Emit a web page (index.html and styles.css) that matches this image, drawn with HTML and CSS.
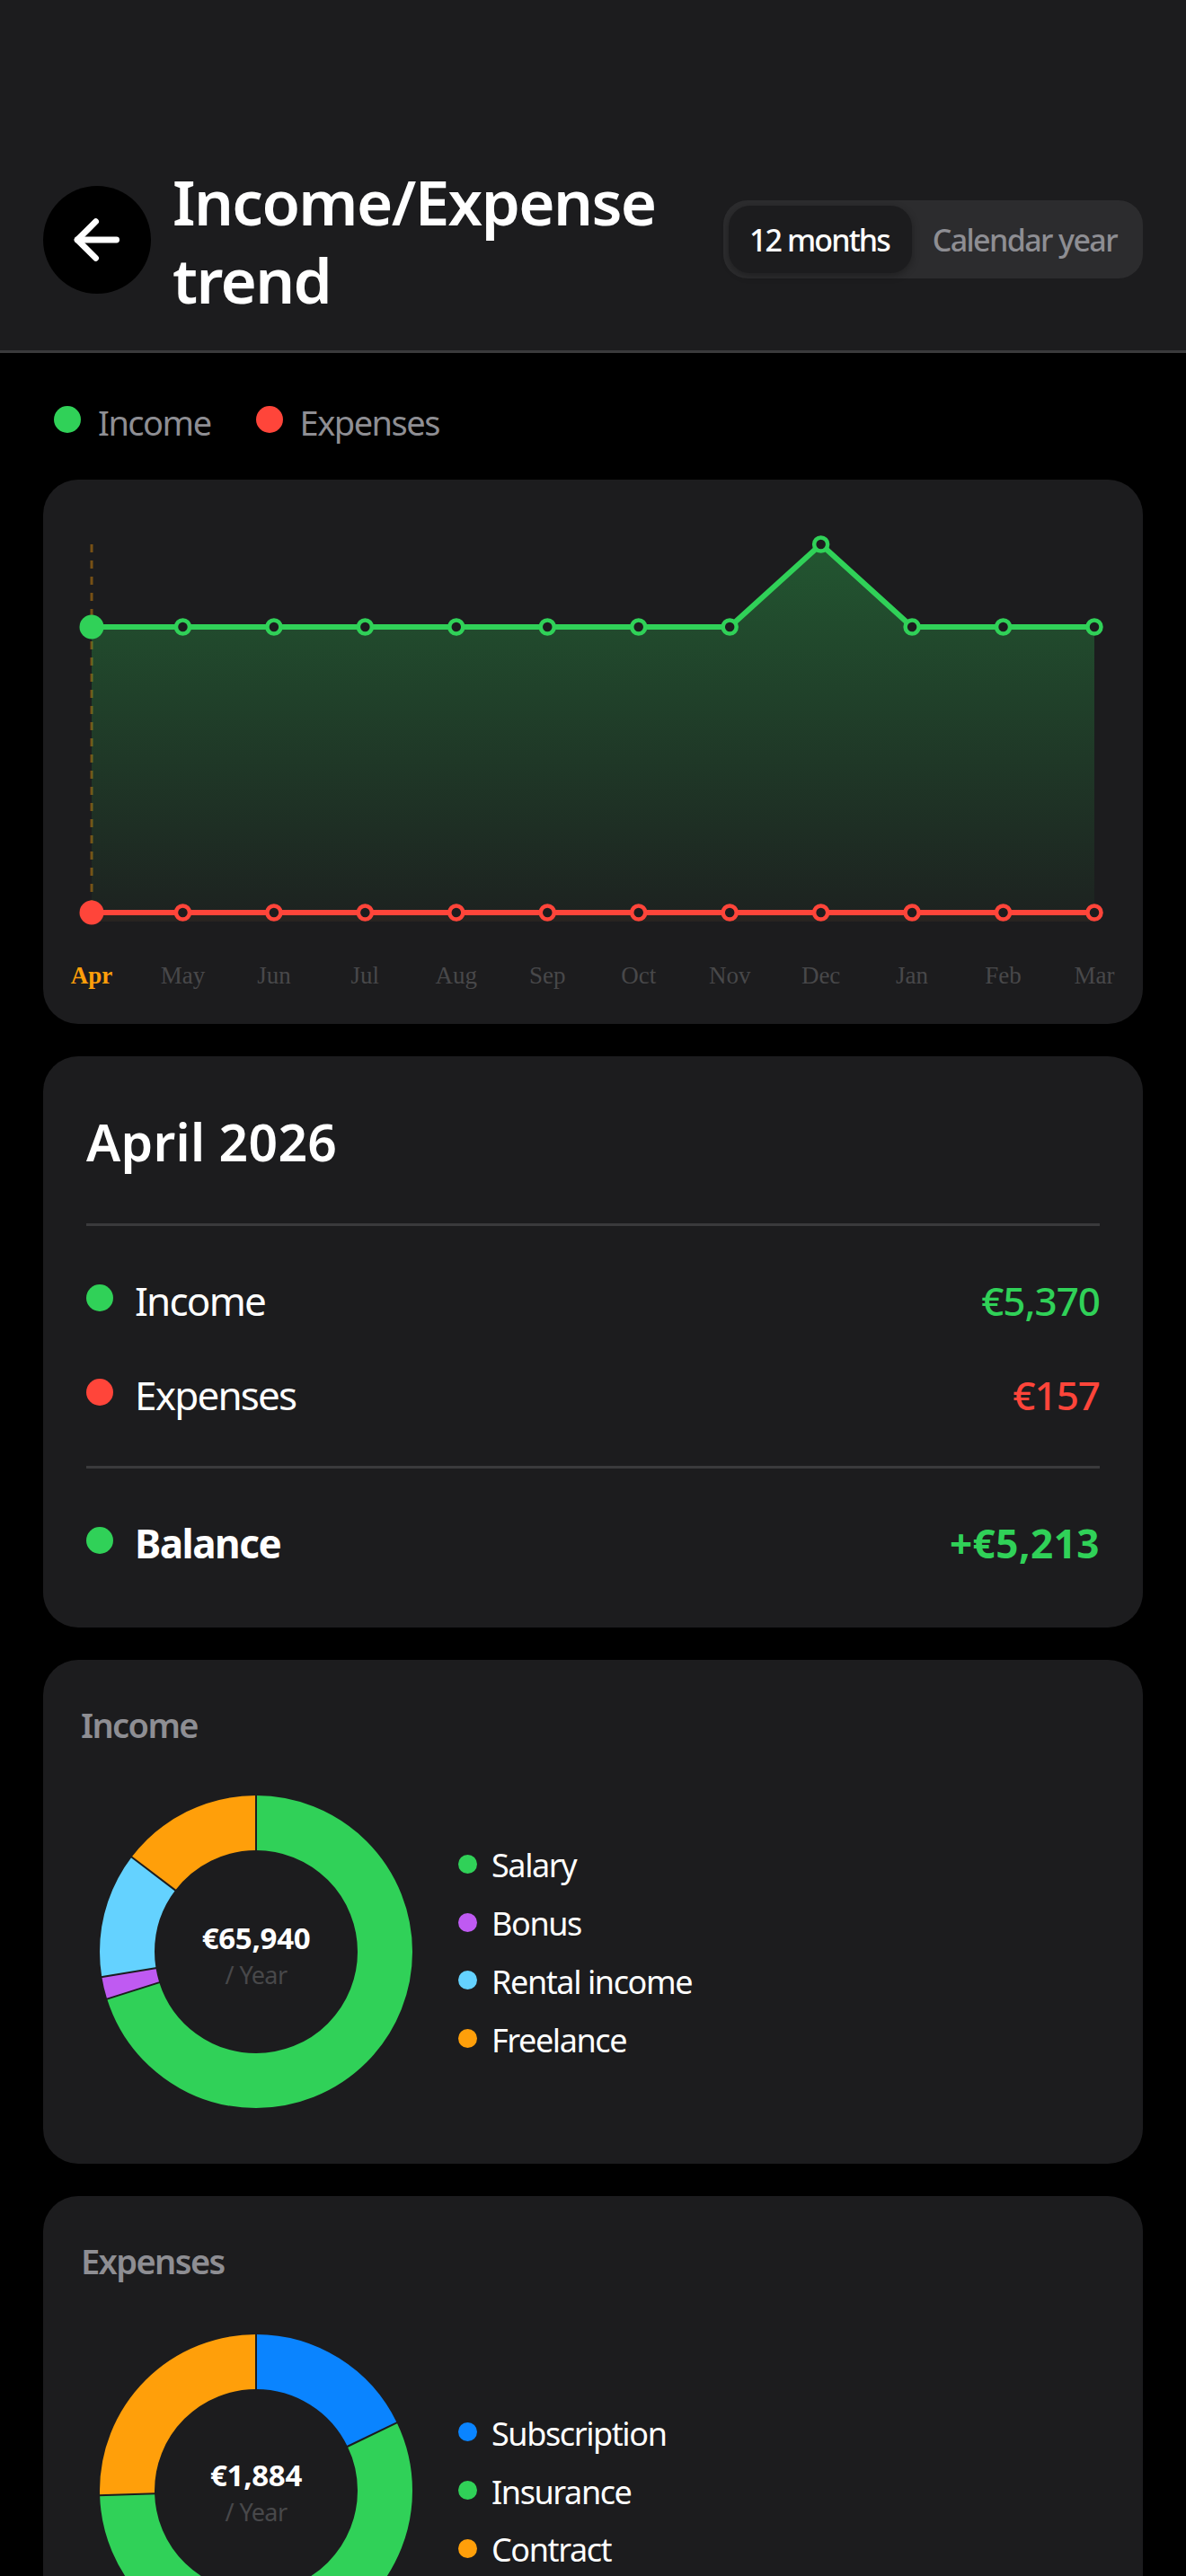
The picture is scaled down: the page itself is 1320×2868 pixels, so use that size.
FILE: index.html
```html
<!DOCTYPE html>
<html lang="en">
<head>
    <meta charset="UTF-8">
    <meta name="viewport" content="width=device-width, initial-scale=1.0">
    <title>Income/Expense trend</title>
    <link rel="stylesheet" href="styles.css">
</head>
<body>
    <div class="app">
        <header class="topbar">
            <button class="back-btn" aria-label="Back">
                <svg width="60" height="60" viewBox="0 0 60 60" fill="none" stroke="#fff" stroke-width="6.8" stroke-linecap="round" stroke-linejoin="round">
                    <path d="M51.6 30H8.1"/>
                    <path d="M28.6 9.7L8.1 30l20.5 20.3"/>
                </svg>
            </button>
            <h1 class="page-title">Income/Expense trend</h1>
            <div class="segmented">
                <span class="segment active">12 months</span>
                <span class="segment">Calendar year</span>
            </div>
        </header>

        <main class="content">
            <div class="chart-legend">
                <span class="legend-item"><i class="dot green"></i>Income</span>
                <span class="legend-item"><i class="dot red"></i>Expenses</span>
            </div>

            <section class="card chart-card">
                <svg class="trend" width="1224" height="606" viewBox="0 0 1224 606">
                    <defs>
                        <linearGradient id="incomeFill" x1="0" y1="0" x2="0" y2="1">
                            <stop offset="0" stop-color="#30d158" stop-opacity="0.32"/>
                            <stop offset="1" stop-color="#30d158" stop-opacity="0.03"/>
                        </linearGradient>
                    </defs>
                    <line class="cursor" x1="54" y1="72" x2="54" y2="482"/>
                    <polygon fill="url(#incomeFill)" points="54,164 764.18,164 865.64,72 967.09,164 1170,164 1170,492 54,492"/>
                    <rect x="54" y="482" width="1116" height="10" fill="#ff453a" opacity="0.05"/>
                    <polyline class="line income" points="54,164 764.18,164 865.64,72 967.09,164 1170,164"/>
                    <polyline class="line expense" points="54,482 1170,482"/>

                    <g class="pts income">
                        <circle cx="155.45" cy="164" r="7.5"/>
                        <circle cx="256.9" cy="164" r="7.5"/>
                        <circle cx="358.36" cy="164" r="7.5"/>
                        <circle cx="459.82" cy="164" r="7.5"/>
                        <circle cx="561.27" cy="164" r="7.5"/>
                        <circle cx="662.73" cy="164" r="7.5"/>
                        <circle cx="764.18" cy="164" r="7.5"/>
                        <circle cx="865.64" cy="72" r="7.5"/>
                        <circle cx="967.09" cy="164" r="7.5"/>
                        <circle cx="1068.55" cy="164" r="7.5"/>
                        <circle cx="1170" cy="164" r="7.5"/>
                    </g>
                    <g class="pts expense">
                        <circle cx="155.45" cy="482" r="7.5"/>
                        <circle cx="256.9" cy="482" r="7.5"/>
                        <circle cx="358.36" cy="482" r="7.5"/>
                        <circle cx="459.82" cy="482" r="7.5"/>
                        <circle cx="561.27" cy="482" r="7.5"/>
                        <circle cx="662.73" cy="482" r="7.5"/>
                        <circle cx="764.18" cy="482" r="7.5"/>
                        <circle cx="865.64" cy="482" r="7.5"/>
                        <circle cx="967.09" cy="482" r="7.5"/>
                        <circle cx="1068.55" cy="482" r="7.5"/>
                        <circle cx="1170" cy="482" r="7.5"/>
                    </g>
                    <circle cx="54" cy="164" r="13.5" fill="#30d158"/>
                    <circle cx="54" cy="482" r="13.5" fill="#ff453a"/>

                    <g class="months">
                        <text class="current" x="54" y="561">Apr</text>
                        <text x="155.45" y="561">May</text>
                        <text x="256.9" y="561">Jun</text>
                        <text x="358.36" y="561">Jul</text>
                        <text x="459.82" y="561">Aug</text>
                        <text x="561.27" y="561">Sep</text>
                        <text x="662.73" y="561">Oct</text>
                        <text x="764.18" y="561">Nov</text>
                        <text x="865.64" y="561">Dec</text>
                        <text x="967.09" y="561">Jan</text>
                        <text x="1068.55" y="561">Feb</text>
                        <text x="1170" y="561">Mar</text>
                    </g>
                </svg>
            </section>

            <section class="card month-card">
                <h2 class="month-title">April 2026</h2>
                <div class="month-rows">
                    <div class="month-row">
                        <span class="row-label"><i class="dot green"></i>Income</span>
                        <span class="row-value text-green">€5,370</span>
                    </div>
                    <div class="month-row">
                        <span class="row-label"><i class="dot red"></i>Expenses</span>
                        <span class="row-value text-red">€157</span>
                    </div>
                </div>
                <div class="month-row balance">
                    <span class="row-label"><i class="dot green"></i>Balance</span>
                    <span class="row-value text-green">+€5,213</span>
                </div>
            </section>

            <section class="card donut-card">
                <h3 class="donut-title">Income</h3>
                <div class="donut-row">
                    <div class="donut">
                        <svg width="350" height="350" viewBox="-175 -175 350 350">
                            <g class="ring" transform="rotate(-90)">
                                <circle stroke="#30d158" pathLength="360" stroke-dasharray="252.4 360"/>
                                <circle stroke="#bf5af2" pathLength="360" stroke-dasharray="8.3 360" stroke-dashoffset="-252.4"/>
                                <circle stroke="#64d2ff" pathLength="360" stroke-dasharray="46.6 360" stroke-dashoffset="-260.7"/>
                                <circle stroke="#ff9f0a" pathLength="360" stroke-dasharray="52.7 360" stroke-dashoffset="-307.3"/>
                            </g>
                            <g class="cuts">
                                <line y1="-112" y2="-175"/>
                                <line y1="-112" y2="-175" transform="rotate(252.4)"/>
                                <line y1="-112" y2="-175" transform="rotate(260.7)"/>
                                <line y1="-112" y2="-175" transform="rotate(307.3)"/>
                            </g>
                        </svg>
                        <div class="donut-center">
                            <strong>€65,940</strong>
                            <span>/ Year</span>
                        </div>
                    </div>
                    <ul class="donut-legend">
                        <li><i class="mini-dot green"></i>Salary</li>
                        <li><i class="mini-dot purple"></i>Bonus</li>
                        <li><i class="mini-dot cyan"></i>Rental income</li>
                        <li><i class="mini-dot orange"></i>Freelance</li>
                    </ul>
                </div>
            </section>

            <section class="card donut-card expenses">
                <h3 class="donut-title">Expenses</h3>
                <div class="donut-row">
                    <div class="donut">
                        <svg width="350" height="350" viewBox="-175 -175 350 350">
                            <g class="ring" transform="rotate(-90)">
                                <circle stroke="#0a84ff" pathLength="360" stroke-dasharray="64.2 360"/>
                                <circle stroke="#30d158" pathLength="360" stroke-dasharray="204.1 360" stroke-dashoffset="-64.2"/>
                                <circle stroke="#ff9f0a" pathLength="360" stroke-dasharray="91.7 360" stroke-dashoffset="-268.3"/>
                            </g>
                            <g class="cuts">
                                <line y1="-112" y2="-175"/>
                                <line y1="-112" y2="-175" transform="rotate(64.2)"/>
                                <line y1="-112" y2="-175" transform="rotate(268.3)"/>
                            </g>
                        </svg>
                        <div class="donut-center">
                            <strong>€1,884</strong>
                            <span>/ Year</span>
                        </div>
                    </div>
                    <ul class="donut-legend">
                        <li><i class="mini-dot blue"></i>Subscription</li>
                        <li><i class="mini-dot green"></i>Insurance</li>
                        <li><i class="mini-dot orange"></i>Contract</li>
                    </ul>
                </div>
            </section>
        </main>
    </div>
</body>
</html>
```
FILE: styles.css
```css
* {
    margin: 0;
    padding: 0;
    box-sizing: border-box;
}
html, body {
    height: 2868px;
    overflow: hidden;
    background: #000;
}
body {
    font-family: 'Noto Sans', 'Open Sans', sans-serif;
    color: #fff;
}
.app {
    height: 2868px;
    overflow: hidden;
}

/* header */
.topbar {
    display: flex;
    align-items: center;
    gap: 24px;
    height: 393px;
    padding: 180px 48px 37px;
    background: #1c1c1e;
    border-bottom: 3px solid #3a3a3c;
}
.back-btn {
    flex: none;
    display: flex;
    align-items: center;
    justify-content: center;
    width: 120px;
    height: 120px;
    border: none;
    border-radius: 50%;
    background: #000;
}
.page-title {
    flex: 1;
    padding-top: 3px;
    font-size: 69px;
    font-weight: 600;
    line-height: 87px;
    letter-spacing: -1.6px;
}
.segmented {
    flex: none;
    display: flex;
    width: 467px;
    height: 87px;
    padding: 6px;
    border-radius: 27px;
    background: #2c2c2e;
}
.segment {
    display: flex;
    align-items: center;
    padding: 0 23px;
    border-radius: 24px;
    font-size: 34px;
    font-weight: 500;
    letter-spacing: -1.6px;
    color: #8e8e93;
    white-space: nowrap;
}
.segment.active {
    width: 204px;
    letter-spacing: -1.9px;
    color: #fff;
    background: #1c1c1e;
    box-shadow: 0 3px 9px rgba(0, 0, 0, 0.3);
}

/* shared */
.content {
    display: flex;
    flex-direction: column;
    gap: 36px;
    padding: 0 48px;
}
.card {
    border-radius: 39px;
    background: #1c1c1e;
}
.dot {
    flex: none;
    width: 30px;
    height: 30px;
    margin-bottom: 5px;
    border-radius: 50%;
}
.green { background: #30d158; }
.red { background: #ff453a; }
.purple { background: #bf5af2; }
.cyan { background: #64d2ff; }
.orange { background: #ff9f0a; }
.blue { background: #0a84ff; }
.text-green { color: #30d158; }
.text-red { color: #ff453a; }

/* chart */
.chart-legend {
    display: flex;
    align-items: center;
    gap: 50px;
    height: 105px;
    padding: 49px 12px 0;
}
.legend-item {
    display: flex;
    align-items: center;
    gap: 19px;
    font-size: 38px;
    letter-spacing: -1.5px;
    color: #8e8e93;
}
.legend-item .dot {
    margin-bottom: 7px;
}
.chart-card {
    height: 606px;
}
.trend {
    display: block;
}
.cursor {
    stroke: #ff9f0a;
    stroke-width: 3;
    stroke-dasharray: 9 9;
    opacity: 0.4;
}
.line {
    fill: none;
    stroke-width: 6;
    stroke-linejoin: round;
}
.line.income { stroke: #30d158; }
.line.expense { stroke: #ff453a; }
.pts {
    fill: #1c1c1e;
    stroke-width: 4.5;
}
.pts.income { stroke: #30d158; }
.pts.expense { stroke: #ff453a; }
.months text {
    font-family: 'Liberation Serif', serif;
    font-size: 27px;
    text-anchor: middle;
    fill: #48484a;
}
.months .current {
    font-weight: bold;
    fill: #ff9f0a;
}

/* month summary */
.month-card {
    height: 636px;
    padding: 48px;
}
.month-title {
    height: 141px;
    border-bottom: 3px solid #3a3a3c;
    font-size: 57px;
    font-weight: 600;
    line-height: 94px;
    letter-spacing: 0.3px;
}
.month-rows {
    display: flex;
    flex-direction: column;
    gap: 39px;
    padding: 48px 0 48px;
    border-bottom: 3px solid #3a3a3c;
}
.month-row {
    display: flex;
    align-items: center;
    justify-content: space-between;
    height: 66px;
    padding-top: 3px;
    font-size: 44px;
}
.month-row.balance {
    margin-top: 48px;
    font-weight: 700;
}
.row-label {
    display: flex;
    align-items: center;
    gap: 24px;
    letter-spacing: -1.8px;
}
.balance .row-label {
    letter-spacing: -1.5px;
}
.row-value {
    font-weight: 500;
    letter-spacing: -1px;
}
.balance .row-value {
    font-weight: 700;
    letter-spacing: 0.5px;
}

/* donuts */
.donut-card {
    flex: none;
    height: 561px;
    padding: 48px 42px;
}
.donut-title {
    height: 102px;
    font-size: 38px;
    font-weight: 600;
    line-height: 48px;
    letter-spacing: -1.6px;
    color: #8e8e93;
}
.expenses .donut-title {
    height: 105px;
}
.donut-row {
    display: flex;
    align-items: center;
    gap: 50px;
    padding-left: 20px;
}
.donut {
    display: grid;
    place-items: center;
}
.donut > * {
    grid-area: 1 / 1;
}
.donut svg {
    display: block;
}
.ring circle {
    r: 143.5px;
    fill: none;
    stroke-width: 61;
}
.cuts line {
    stroke: #1c1c1e;
    stroke-width: 2;
}
.donut-center {
    display: flex;
    flex-direction: column;
    align-items: center;
    margin-top: 8px;
}
.expenses .donut-center {
    margin-top: 4px;
}
.donut-center strong {
    font-size: 33px;
    font-weight: 700;
    line-height: 44px;
    letter-spacing: -0.3px;
}
.donut-center span {
    font-size: 27px;
    line-height: 38px;
    letter-spacing: -0.6px;
    color: #48484a;
}
.donut-legend {
    display: flex;
    flex-direction: column;
    gap: 12px;
    padding-top: 2px;
    list-style: none;
}
.donut-legend li {
    display: flex;
    align-items: center;
    gap: 16px;
    height: 52.7px;
    font-size: 36px;
    letter-spacing: -1.4px;
}
.mini-dot {
    flex: none;
    width: 21px;
    height: 21px;
    margin-bottom: 3px;
    border-radius: 50%;
}
```
